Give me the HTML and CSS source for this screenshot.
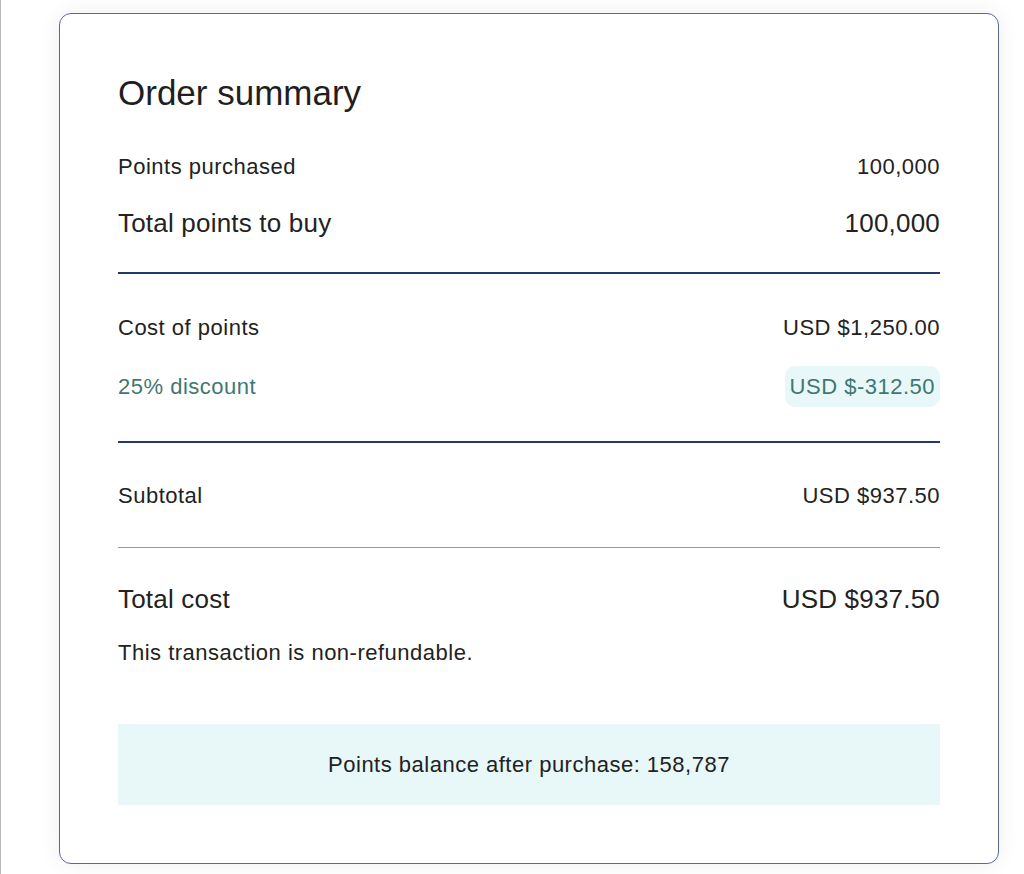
FILE: index.html
```html
<!DOCTYPE html>
<html lang="en">
<head>
<meta charset="utf-8">
<title>Order summary</title>
<link rel="stylesheet" href="styles.css">
</head>
<body>
<div class="page">
  <section class="card">
    <h1 class="title">Order summary</h1>
    <div class="row row-sm first">
      <span>Points purchased</span>
      <span>100,000</span>
    </div>
    <div class="row row-lg total-points">
      <span>Total points to buy</span>
      <span>100,000</span>
    </div>
    <hr class="rule rule-dark rule-a">
    <div class="row row-sm cost">
      <span>Cost of points</span>
      <span>USD $1,250.00</span>
    </div>
    <div class="row discount">
      <span class="discount-label">25% discount</span>
      <span class="pill">USD $-312.50</span>
    </div>
    <hr class="rule rule-dark rule-b">
    <div class="row row-sm subtotal">
      <span>Subtotal</span>
      <span>USD $937.50</span>
    </div>
    <hr class="rule rule-light">
    <div class="row row-lg total-cost">
      <span>Total cost</span>
      <span>USD $937.50</span>
    </div>
    <p class="note">This transaction is non-refundable.</p>
    <div class="balance">Points balance after purchase: 158,787</div>
  </section>
</div>
</body>
</html>
```
FILE: styles.css
```css
* { box-sizing: border-box; }
html, body { margin: 0; padding: 0; background: #ffffff; }
body {
  font-family: "Liberation Sans", Arial, Helvetica, sans-serif;
  color: #222222;
  border-left: 1px solid #b9b9b9;
  min-height: 874px;
}
.page {
  padding: 13px 0 0 58px;
}
.card {
  width: 940px;
  height: 851px;
  border: 1px solid #5b6894;
  border-radius: 12px;
  background: #ffffff;
  box-shadow: 0 0 22px rgba(0, 0, 0, 0.07);
  padding: 59px 58px 58px 58px;
  display: flex;
  flex-direction: column;
}
.title {
  margin: 0;
  font-size: 35px;
  line-height: 40px;
  font-weight: 400;
  color: #1f1f1f;
}
.row {
  display: flex;
  justify-content: space-between;
  align-items: center;
}
.row-sm { font-size: 22px; line-height: 28px; letter-spacing: 0.5px; }
.row-lg { font-size: 26px; line-height: 32px; letter-spacing: 0.2px; }
.first { margin-top: 40px; }
.total-points { margin-top: 26px; }
.rule {
  border: 0;
  margin: 0;
  width: 100%;
}
.rule-dark { height: 2px; background: #26386a; }
.rule-a { margin-top: 33px; }
.cost { margin-top: 40px; }
.discount {
  margin-top: 24px;
  font-size: 22px;
  line-height: 28px;
  letter-spacing: 0.5px;
  height: 41px;
}
.discount-label { color: #3f7773; }
.pill {
  background: #e8f7f7;
  color: #3f7773;
  border-radius: 10px;
  padding: 0 5px;
  height: 41px;
  line-height: 41px;
}
.rule-b { margin-top: 34px; }
.subtotal { margin-top: 39px; }
.rule-light { height: 1px; background: #9a9a9a; margin-top: 37px; }
.total-cost { margin-top: 35px; }
.note {
  margin: 24px 0 0 0;
  font-size: 22px;
  line-height: 28px;
  letter-spacing: 0.5px;
}
.balance {
  margin-top: 57px;
  height: 81px;
  background: #e8f7f7;
  display: flex;
  align-items: center;
  justify-content: center;
  font-size: 22px;
  line-height: 28px;
  letter-spacing: 0.5px;
}
```
